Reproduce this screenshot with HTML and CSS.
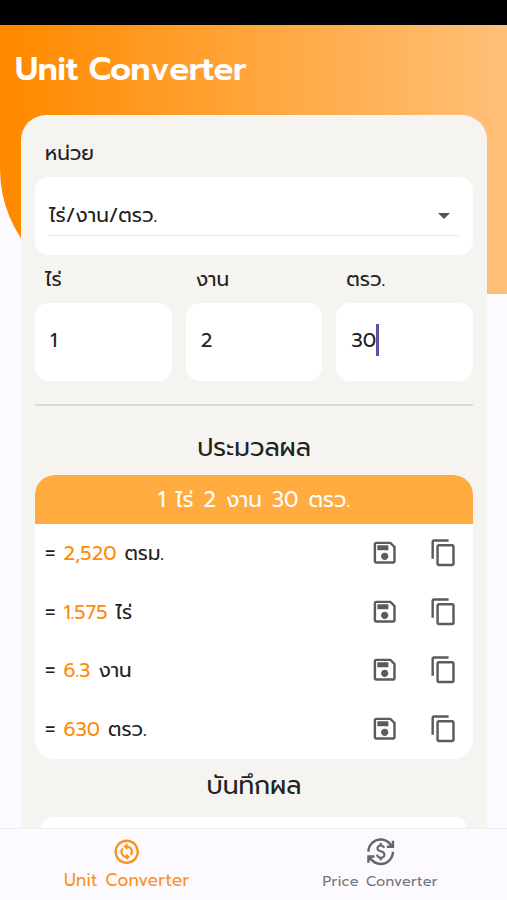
FILE: index.html
```html
<!DOCTYPE html>
<html lang="th">
<head>
<meta charset="utf-8">
<title>Unit Converter</title>
<link rel="stylesheet" href="styles.css">
</head>
<body>
<svg class="defs" aria-hidden="true">
  <symbol id="save" viewBox="0 0 24 24"><path d="M17 3H5c-1.11 0-2 .9-2 2v14c0 1.1.89 2 2 2h14c1.1 0 2-.9 2-2V7l-4-4zm2 16H5V5h11.17L19 7.83V19zm-7-7c-1.66 0-3 1.34-3 3s1.34 3 3 3 3-1.34 3-3-1.34-3-3-3zM6 6h9v4H6z"/></symbol>
  <symbol id="copy" viewBox="0 0 24 24"><path d="M16 1H4c-1.1 0-2 .9-2 2v14h2V3h12V1zm3 4H8c-1.1 0-2 .9-2 2v14c0 1.1.9 2 2 2h11c1.1 0 2-.9 2-2V7c0-1.1-.9-2-2-2zm0 16H8V7h11v14z"/></symbol>
</svg>
<div class="app">
  <div class="status"></div>
  <main class="screen">
    <header class="hero"><h1 class="title">Unit Converter</h1></header>
    <section class="card">
      <label class="label">หน่วย</label>
      <div class="select"><div class="select-line"><span>ไร่/งาน/ตรว.</span><i class="caret"></i></div></div>
      <div class="fields">
        <div class="field"><label class="label">ไร่</label><div class="input">1</div></div>
        <div class="field"><label class="label">งาน</label><div class="input">2</div></div>
        <div class="field"><label class="label">ตรว.</label><div class="input">30<i class="cursor"></i></div></div>
      </div>
      <hr class="rule">
      <h2 class="heading">ประมวลผล</h2>
      <div class="results">
        <div class="summary">1 ไร่ 2 งาน 30 ตรว.</div>
        <div class="row"><span class="value">= <b>2,520</b> ตรม.</span><svg class="icon"><use href="#save"/></svg><svg class="icon"><use href="#copy"/></svg></div>
        <div class="row"><span class="value">= <b>1.575</b> ไร่</span><svg class="icon"><use href="#save"/></svg><svg class="icon"><use href="#copy"/></svg></div>
        <div class="row"><span class="value">= <b>6.3</b> งาน</span><svg class="icon"><use href="#save"/></svg><svg class="icon"><use href="#copy"/></svg></div>
        <div class="row"><span class="value">= <b>630</b> ตรว.</span><svg class="icon"><use href="#save"/></svg><svg class="icon"><use href="#copy"/></svg></div>
      </div>
      <h2 class="heading saved">บันทึกผล</h2>
      <div class="saved-box"></div>
    </section>
  </main>
  <nav class="nav">
    <a class="tab active"><svg class="icon" viewBox="0 0 24 24"><path d="M12 2C6.48 2 2 6.48 2 12s4.48 10 10 10 10-4.48 10-10S17.52 2 12 2zm0 18c-4.41 0-8-3.59-8-8s3.59-8 8-8 8 3.59 8 8-3.59 8-8 8z"/><path d="M12.6 5v1.9a5.1 5.1 0 0 1 3.3 8.4l-1.3-1.2a3.3 3.3 0 0 0-2-5.4v1.9L9.3 7.8zM11.4 19v-1.9a5.1 5.1 0 0 1-3.3-8.4l1.3 1.2a3.3 3.3 0 0 0 2 5.4v-1.9l3.3 2.8z"/></svg><span>Unit Converter</span></a>
    <a class="tab"><svg class="icon" viewBox="0 0 24 24"><path d="M12.89,11.1c-1.78-0.59-2.64-0.96-2.64-1.9c0-1.02,1.11-1.39,1.81-1.39c1.31,0,1.79,0.99,1.9,1.34l1.58-0.67C15.39,8.03,14.72,6.56,13,6.24V5h-2v1.26C8.52,6.82,8.51,9.12,8.51,9.22c0,2.27,2.25,2.91,3.35,3.31c1.58,0.56,2.28,1.07,2.28,2.03c0,1.13-1.05,1.61-1.98,1.61c-1.82,0-2.34-1.87-2.4-2.09L8.1,14.75c0.63,2.19,2.28,2.78,2.9,2.96V19h2v-1.24c0.4-0.09,2.9-0.59,2.9-3.22C15.9,13.15,15.29,11.93,12.89,11.1z M3,21H1v-6h6v2l-2.48,0c1.61,2.41,4.36,4,7.48,4c4.97,0,9-4.03,9-9h2c0,6.08-4.92,11-11,11c-3.72,0-7.01-1.85-9-4.67L3,21z M1,12C1,5.92,5.92,1,12,1c3.72,0,7.01,1.85,9,4.67L21,3h2v6h-6V7l2.48,0C17.87,4.59,15.12,3,12,3c-4.97,0-9,4.03-9,9H1z"/></svg><span>Price Converter</span></a>
  </nav>
</div>
</body>
</html>
```
FILE: styles.css
```css
* { box-sizing: border-box; }
body { margin: 0; background: #fdfaff; color: #222; font-family: Prompt, Lato, "Noto Sans Thai", "Noto Sans", sans-serif; }
.defs { display: none; }
.app { height: 900px; display: flex; flex-direction: column; overflow: hidden; }
.status { height: 25px; background: #000; flex: none; }
.screen { flex: 1; min-height: 0; overflow: hidden; }
.hero { height: 269px; padding: 23px 15px; background: linear-gradient(90deg, #ff8a00 3%, #ffa63c 50%, #ffc078 100%); border-bottom-left-radius: 125px; }
.title { margin: 0; color: #fff; font-size: 32.5px; line-height: 44px; font-weight: 600; letter-spacing: -.4px; white-space: nowrap; }
.card { position: relative; width: 466px; height: 760px; margin: -179px 0 0 21px; padding: 23px 14px 0; background: #f5f4f0; border-radius: 25px; }
.label { display: block; height: 30px; padding-left: 10px; font-size: 20px; line-height: 30px; white-space: nowrap; }
.select { height: 78px; margin-top: 9px; padding: 18px 14px 0; background: #fff; border-radius: 14px; }
.select-line { height: 41px; display: flex; align-items: center; justify-content: space-between; border-bottom: 1px solid #e6e6e6; font-size: 20px; line-height: 40px; }
.caret { margin: 2px 9px 0 0; border: 6px solid transparent; border-top-color: #555; border-bottom: 0; }
.fields { display: grid; grid-template-columns: repeat(3, 1fr); gap: 14px; margin-top: 9px; }
.input { height: 78px; margin-top: 9px; padding: 0 15px 4px; display: flex; align-items: center; background: #fff; border-radius: 14px; font-size: 20px; }
.cursor { width: 2.5px; height: 32px; background: #5f50a4; }
.rule { height: 2px; margin: 23px 0 0; border: 0; background: #d8d8d6; }
.heading { margin: 22px 0 0; height: 40px; text-align: center; font-size: 25px; line-height: 40px; font-weight: 400; }
.results { margin-top: 7px; height: 284px; background: #fff; border-radius: 20px; overflow: hidden; }
.summary { height: 49px; background: #ffab40; color: #fff; text-align: center; font-size: 21.5px; line-height: 50px; word-spacing: 2px; }
.row { height: 58.6px; display: flex; align-items: center; padding: 0 15px 0 10px; }
.value { flex: 1; font-size: 19.8px; white-space: nowrap; word-spacing: .7px; }
.value b { color: #ff8a0c; font-weight: 400; }
.icon { width: 29.4px; height: 29.4px; fill: #5b5b5b; flex: none; }
.row .icon { margin-top: -1px; }
.row .icon + .icon { margin-left: 29px; }
.saved { margin-top: 7px; }
.saved-box { height: 60px; margin: 11px 5px 0; background: #fff; border-radius: 14px; }
.nav { height: 72px; flex: none; display: grid; grid-template-columns: 1fr 1fr; background: #fdfaff; border-top: 1px solid #f0eef0; }
.tab { display: flex; flex-direction: column; align-items: center; padding-top: 8px; color: #777; font-size: 14.5px; line-height: 30px; letter-spacing: .25px; word-spacing: 1.5px; }
.tab .icon { fill: #666; }
.tab.active { color: #f9941e; font-size: 17px; line-height: 28px; }
.tab.active .icon { fill: #f9941e; }
```
